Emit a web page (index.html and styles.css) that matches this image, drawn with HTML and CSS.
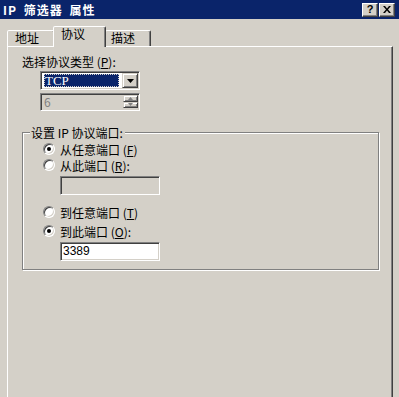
FILE: index.html
```html
<!DOCTYPE html>
<html lang="zh">
<head>
<meta charset="utf-8">
<title>IP 筛选器 属性</title>
<link rel="stylesheet" href="styles.css">
</head>
<body>
<div class="window">
  <div class="titlebar">
    <span class="title">IP 筛选器 属性</span>
    <div class="tbtns">
      <span class="tbtn help">?</span>
      <span class="tbtn close">
        <svg width="8" height="7" viewBox="0 0 8 7"><path d="M0 0h2l2 2.5L6 0h2L5 3.5 8 7H6L4 4.5 2 7H0l3-3.5z" fill="#000"/></svg>
      </span>
    </div>
  </div>
  <div class="tabs">
    <div class="tab first">地址</div>
    <div class="tab active">协议</div>
    <div class="tab">描述</div>
  </div>
  <div class="panel">
    <div class="label">选择协议类型 (<u>P</u>):</div>
    <div class="combo">
      <div class="combo-field"><span class="sel">TCP</span></div>
      <div class="btn drop"><svg width="7" height="4" viewBox="0 0 7 4"><path d="M0 0h7L3.5 4z" fill="#000"/></svg></div>
    </div>
    <div class="spin">
      <div class="spin-field">6</div>
      <div class="spin-btns">
        <div class="btn sbtn"><svg width="5" height="3" viewBox="0 0 5 3"><path d="M2.5 0L5 3H0z" fill="#808080"/></svg></div>
        <div class="btn sbtn"><svg width="5" height="3" viewBox="0 0 5 3"><path d="M0 0h5L2.5 3z" fill="#808080"/></svg></div>
      </div>
    </div>
    <div class="group">
      <div class="glabel">设置 IP 协议端口:</div>
      <div class="radio-row first-row"><span class="radio checked"></span><span>从任意端口 (<u>F</u>)</span></div>
      <div class="radio-row"><span class="radio"></span><span>从此端口 (<u>R</u>):</span></div>
      <div class="edit disabled"></div>
      <div class="radio-row gap-row"><span class="radio"></span><span>到任意端口 (<u>T</u>)</span></div>
      <div class="radio-row last-row"><span class="radio checked"></span><span>到此端口 (<u>O</u>):</span></div>
      <div class="edit">3389</div>
    </div>
  </div>
</div>
</body>
</html>
```
FILE: styles.css
```css
* { box-sizing: border-box; }
html, body { margin: 0; padding: 0; background: #d4d0c8; }
body {
  font-family: "Noto Sans CJK SC", "Liberation Sans", sans-serif;
  font-size: 12px;
  color: #000;
}
u { text-decoration: underline; text-underline-offset: 1px; }
.window {
  width: 399px;
  height: 397px;
  overflow: hidden;
  background: #d4d0c8;
}
.titlebar {
  height: 19px;
  background: #0a246a;
  color: #fff;
  display: flex;
  align-items: center;
  justify-content: space-between;
  padding: 0 4px 0 3px;
}
.title {
  font-weight: bold;
  font-size: 12px;
  line-height: 14px;
  letter-spacing: 1px;
  word-spacing: 3px;
}
.tbtns { display: flex; gap: 1px; }
.tbtn {
  width: 16px;
  height: 14px;
  background: #d4d0c8;
  border: 1px solid;
  border-color: #fff #404040 #404040 #fff;
  box-shadow: inset -1px -1px #808080;
  color: #000;
  display: flex;
  align-items: center;
  justify-content: center;
  font-family: "Liberation Sans", sans-serif;
  font-weight: bold;
  font-size: 11px;
  line-height: 11px;
}
.tabs {
  display: flex;
  align-items: flex-end;
  height: 20px;
  margin: 7px 0 0 7px;
}
.tab {
  height: 16px;
  padding: 0 9px 0 8px;
  border: 1px solid;
  border-bottom: none;
  border-color: #fff #404040 transparent #fff;
  box-shadow: inset -1px 0 #808080;
  border-radius: 2px 2px 0 0;
  line-height: 14px;
  background: #d4d0c8;
}
.tab.first { width: 48px; padding-left: 7px; }
.tab.active {
  height: 21px;
  width: 53px;
  margin: 0 -1px -1px -2px;
  padding-left: 7px;
  line-height: 13px;
  position: relative;
  z-index: 1;
}
.tab:last-child { width: 46px; padding-left: 5px; }
.panel {
  margin-left: 7px;
  width: 386px;
  height: 360px;
  border-left: 1px solid #fff;
  border-top: 1px solid #fff;
  border-right: 1px solid #404040;
  box-shadow: inset -1px 0 #808080;
  padding: 8px 0 0 14px;
}
.label { line-height: 13px; height: 13px; }
.combo, .spin {
  width: 100px;
  margin-left: 18px;
  border: 1px solid;
  border-color: #808080 #fff #fff #808080;
  box-shadow: inset 1px 1px #404040, inset -1px -1px #d4d0c8;
  display: flex;
  padding: 2px;
}
.combo { height: 19px; margin-top: 3px; background: #fff; }
.combo-field { flex: 1; padding: 0 1px 0 1px; }
.sel {
  display: block;
  height: 13px;
  background: #0a246a;
  color: #fff;
  outline: 1px dotted #d4d0c8;
  outline-offset: -1px;
  font-family: "Liberation Serif", serif;
  font-size: 13px;
  line-height: 13px;
  padding-left: 1px;
  margin-right: 2px;
}
.btn {
  background: #d4d0c8;
  border: 1px solid;
  border-color: #d4d0c8 #404040 #404040 #d4d0c8;
  box-shadow: inset 1px 1px #fff, inset -1px -1px #808080;
  display: flex;
  align-items: center;
  justify-content: center;
}
.drop { width: 16px; height: 15px; margin: -1px -1px 0 0; }
.spin { height: 18px; margin-top: 3px; background: #d4d0c8; }
.spin-field { flex: 1; color: #808080; line-height: 12px; padding-left: 1px; }
.spin-btns { display: flex; flex-direction: column; width: 15px; margin: -1px -1px 0 0; }
.sbtn { height: 7px; }
.group {
  width: 357px;
  height: 138px;
  margin-top: 21px;
  border: 1px solid #808080;
  box-shadow: inset 1px 1px #fff, 1px 1px #fff;
  padding: 0 0 0 20px;
}
.glabel {
  width: fit-content;
  margin: -7px 0 0 -13px;
  padding: 0 2px 0 1px;
  background: #d4d0c8;
  line-height: 13px;
  height: 13px;
}
.radio-row {
  display: flex;
  align-items: center;
  height: 16px;
  gap: 5px;
  line-height: 13px;
}
.first-row { margin-top: 2px; }
.gap-row { margin-top: 9px; }
.last-row { margin-top: 3px; }
.radio {
  width: 12px;
  height: 12px;
  border-radius: 50%;
  border: 1px solid;
  border-color: #808080 #fff #fff #808080;
  box-shadow: inset 1px 1px #404040, inset -1px -1px #d4d0c8;
  background: #fff;
  position: relative;
  flex: none;
}
.radio.checked::after {
  content: "";
  position: absolute;
  left: 3px;
  top: 3px;
  width: 4px;
  height: 4px;
  border-radius: 50%;
  background: #000;
}
.edit {
  width: 100px;
  height: 19px;
  margin: 3px 0 0 17px;
  border: 1px solid;
  border-color: #808080 #fff #fff #808080;
  box-shadow: inset 1px 1px #404040, inset -1px -1px #d4d0c8;
  background: #fff;
  padding: 2px 0 0 2px;
  line-height: 13px;
  font-family: "Liberation Sans", sans-serif;
}
.edit.disabled { background: #d4d0c8; }
```
